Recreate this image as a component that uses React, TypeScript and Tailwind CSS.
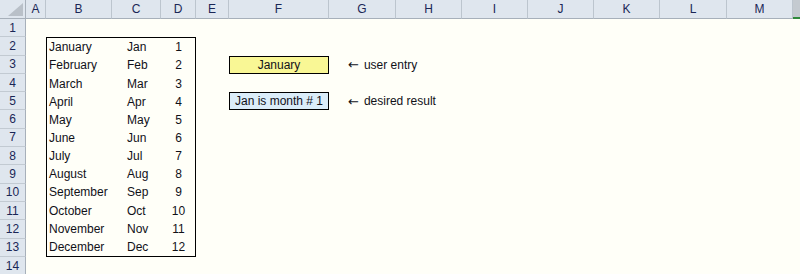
const columns = ['A', 'B', 'C', 'D', 'E', 'F', 'G', 'H', 'I', 'J', 'K', 'L', 'M']
const rows = [1, 2, 3, 4, 5, 6, 7, 8, 9, 10, 11, 12, 13, 14]

const months: [string, string, number][] = [
  ['January', 'Jan', 1],
  ['February', 'Feb', 2],
  ['March', 'Mar', 3],
  ['April', 'Apr', 4],
  ['May', 'May', 5],
  ['June', 'Jun', 6],
  ['July', 'Jul', 7],
  ['August', 'Aug', 8],
  ['September', 'Sep', 9],
  ['October', 'Oct', 10],
  ['November', 'Nov', 11],
  ['December', 'Dec', 12],
]

const font = { fontFamily: '"Liberation Sans", Arial, sans-serif' }
const arrowFont = { fontFamily: '"DejaVu Sans", sans-serif' }

// note text in column G, spilling over into the empty cells to its right
function Note({ text, row }: { text: string; row: string }) {
  return (
    <div className={`${row} col-start-8 flex items-center pl-[19px] whitespace-nowrap`}>
      <span className="mr-[5px] text-[13px]" style={arrowFont}>
        ←
      </span>
      {text}
    </div>
  )
}

export default function App() {
  return (
    <div
      className="w-[800px] h-[274px] overflow-hidden bg-[#fffff8] text-[12px] text-[#111118]"
      style={font}
    >
      <div className="grid grid-cols-[26px_20px_66px_49px_35px_33px_100px_67px_66px_66px_66px_66px_67px_66px_7px] grid-rows-[19px_repeat(14,18.3px)]">
        {/* corner cell with the select-all triangle */}
        <div className="col-start-1 row-start-1 bg-[#dfe6ee] border-r border-b border-[#a7b0ba] flex items-end justify-end pr-[2px] pb-[2px]">
          <svg width="15" height="13" viewBox="0 0 15 13">
            <polygon points="15,0 15,13 0,13" fill="#b9c0c8" />
          </svg>
        </div>

        {/* column headers */}
        {columns.map((c) => (
          <div
            key={c}
            className="row-start-1 bg-[#dfe6ee] border-r border-b border-r-[#bcc5ce] border-b-[#a7b0ba] flex items-center justify-center text-[#1a2656]"
          >
            {c}
          </div>
        ))}
        <div className="row-start-1 bg-[#c4cad0] border-b-2 border-[#2f8a3c]" />

        {/* row headers */}
        {rows.map((r) => (
          <div
            key={r}
            className="col-start-1 bg-[#dfe6ee] border-r border-b border-r-[#a7b0ba] border-b-[#c2cad2] flex items-center justify-center text-[#1a2656]"
          >
            {r}
          </div>
        ))}

        {/* month lookup table B2:D13 */}
        <div className="col-start-3 col-span-3 row-start-3 row-span-12 border border-black grid grid-rows-[repeat(12,1fr)]">
          {months.map(([name, abbr, num]) => (
            <div key={name} className="grid grid-cols-[66px_49px_1fr] items-center">
              <span className="pl-[2px]">{name}</span>
              <span className="pl-[14px]">{abbr}</span>
              <span className="text-center">{num}</span>
            </div>
          ))}
        </div>

        {/* F3 input cell */}
        <div className="col-start-7 row-start-4 border border-black bg-[#f9f795] flex items-center justify-center">
          January
        </div>
        <Note text="user entry" row="row-start-4" />

        {/* F5 formula cell */}
        <div className="col-start-7 row-start-6 border border-black bg-[#dbedf9] flex items-center justify-center whitespace-nowrap">
          Jan is month # 1
        </div>
        <Note text="desired result" row="row-start-6" />
      </div>
    </div>
  )
}
